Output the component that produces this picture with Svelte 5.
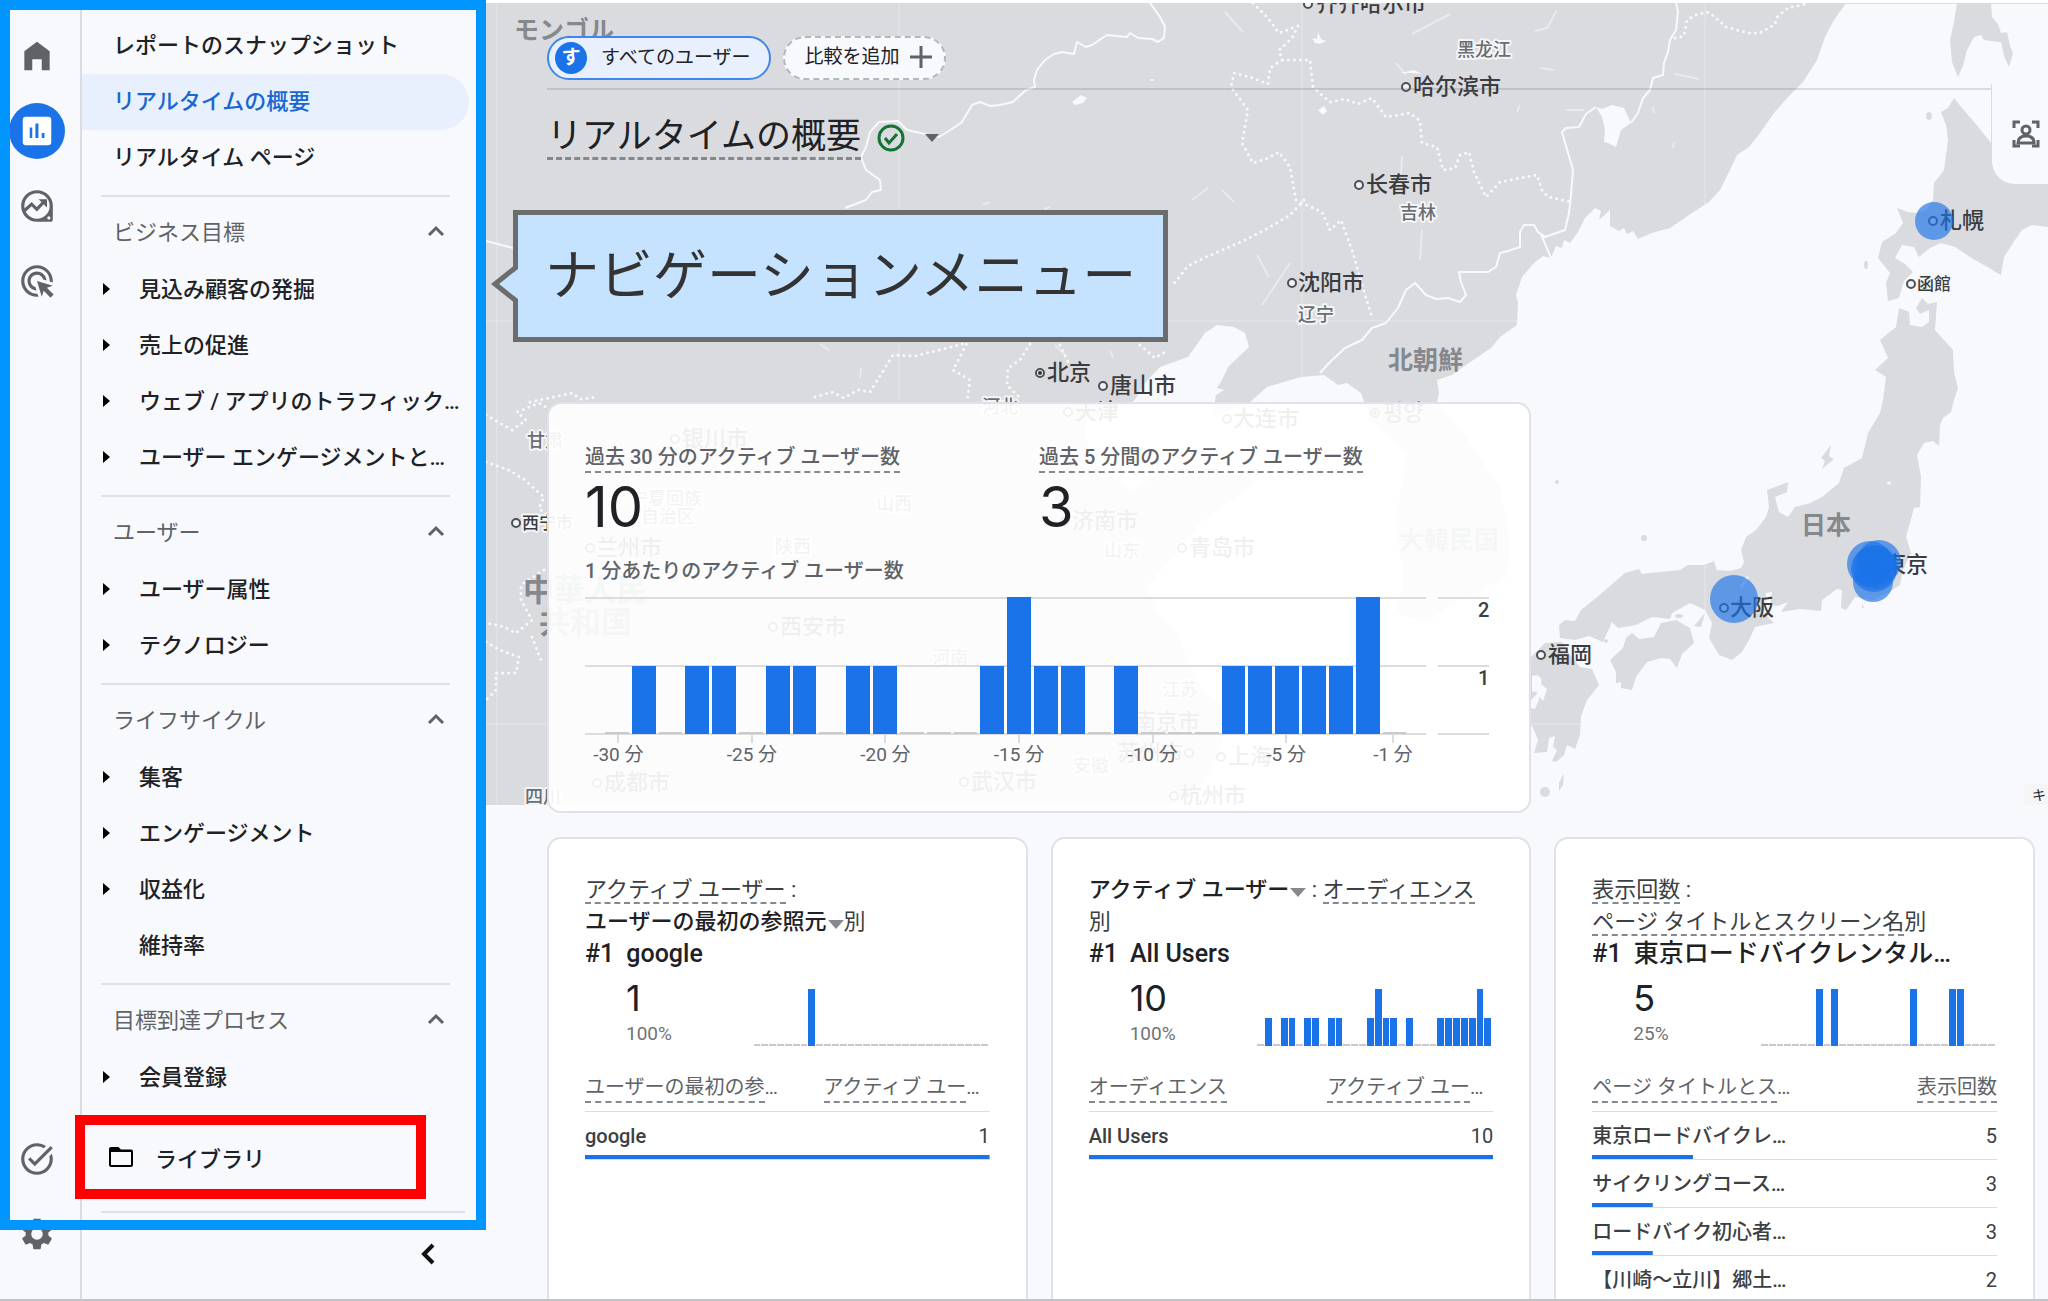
<script>
  const topLinks = [
    { label: 'レポートのスナップショット' },
    { label: 'リアルタイムの概要', active: true },
    { label: 'リアルタイム ページ' }
  ];

  const sections = [
    {
      title: 'ビジネス目標',
      items: [
        { label: '見込み顧客の発掘', open: true },
        { label: '売上の促進', open: true },
        { label: 'ウェブ / アプリのトラフィック…', open: true },
        { label: 'ユーザー エンゲージメントと…', open: true }
      ]
    },
    {
      title: 'ユーザー',
      items: [
        { label: 'ユーザー属性', open: true },
        { label: 'テクノロジー', open: true }
      ]
    },
    {
      title: 'ライフサイクル',
      items: [
        { label: '集客', open: true },
        { label: 'エンゲージメント', open: true },
        { label: '収益化', open: true },
        { label: '維持率', open: false }
      ]
    },
    { title: '目標到達プロセス', items: [{ label: '会員登録', open: true }] }
  ];

  // Active users per minute, from -30 to -1
  const perMinute = [0, 1, 0, 1, 1, 0, 1, 1, 0, 1, 1, 0, 0, 0, 1, 2, 1, 1, 0, 1, 0, 0, 0, 1, 1, 1, 1, 1, 2, 0];
  const axis = [
    { col: 1, text: '-30 分' },
    { col: 6, text: '-25 分' },
    { col: 11, text: '-20 分' },
    { col: 16, text: '-15 分' },
    { col: 21, text: '-10 分' },
    { col: 26, text: '-5 分' },
    { col: 30, text: '-1 分' }
  ];

  const spikes = (hits) => Array.from({ length: 30 }, (_, i) => (hits.includes(i) ? 2 : 0));

  const cards = [
    {
      metric: 'アクティブ ユーザー',
      dimension: 'ユーザーの最初の参照元',
      pick: 'dimension',
      lineBreak: true,
      top: 'google',
      value: '1',
      share: '100%',
      spark: spikes([7]),
      headA: 'ユーザーの最初の参',
      cutA: true,
      headB: 'アクティブ ユー',
      cutB: true,
      rows: [{ name: 'google', n: '1', pct: 100 }]
    },
    {
      metric: 'アクティブ ユーザー',
      dimension: 'オーディエンス',
      pick: 'metric',
      lineBreak: false,
      top: 'All Users',
      value: '10',
      share: '100%',
      spark: [...perMinute.slice(0, 29), 1],
      headA: 'オーディエンス',
      cutA: false,
      headB: 'アクティブ ユー',
      cutB: true,
      rows: [{ name: 'All Users', n: '10', pct: 100 }]
    },
    {
      metric: '表示回数',
      dimension: 'ページ タイトルとスクリーン名',
      pick: '',
      lineBreak: true,
      top: '東京ロードバイクレンタル…',
      value: '5',
      share: '25%',
      spark: spikes([7, 9, 19, 24, 25]),
      headA: 'ページ タイトルとス',
      cutA: true,
      headB: '表示回数',
      cutB: false,
      rows: [
        { name: '東京ロードバイクレ…', n: '5', pct: 25 },
        { name: 'サイクリングコース…', n: '3', pct: 15 },
        { name: 'ロードバイク初心者…', n: '3', pct: 15 },
        { name: '【川崎〜立川】郷土…', n: '2', pct: 10 }
      ]
    }
  ];

  // Map labels: x is the left edge of the text, y its vertical middle; m is the marker's x
  const cities = [
    { t: '齐齐哈尔市', x: 1316, y: 3, m: 1308 },
    { t: '哈尔滨市', x: 1413, y: 86, m: 1406 },
    { t: '长春市', x: 1366, y: 184, m: 1359 },
    { t: '沈阳市', x: 1298, y: 282, m: 1292 },
    { t: '北京', x: 1047, y: 372, m: 1040, capital: true },
    { t: '唐山市', x: 1110, y: 385, m: 1103 },
    { t: '札幌', x: 1940, y: 220, m: 1933 },
    { t: '東京', x: 1884, y: 564 },
    { t: '大阪', x: 1730, y: 607, m: 1724 },
    { t: '福岡', x: 1548, y: 654, m: 1541 },
    { t: '银川市', x: 682, y: 438, m: 675 },
    { t: '兰州市', x: 596, y: 547, m: 590 },
    { t: '西安市', x: 780, y: 626, m: 773 },
    { t: '成都市', x: 604, y: 782, m: 597 },
    { t: '武汉市', x: 971, y: 781, m: 964 },
    { t: '天津', x: 1075, y: 411, m: 1068 },
    { t: '大连市', x: 1233, y: 418, m: 1227 },
    { t: '평양', x: 1383, y: 412, m: 1375, capital: true },
    { t: '济南市', x: 1072, y: 520, m: 1065 },
    { t: '青岛市', x: 1189, y: 547, m: 1182 },
    { t: '南京市', x: 1134, y: 721 },
    { t: '苏州市', x: 1117, y: 752, m: 1189 },
    { t: '上海', x: 1228, y: 756, m: 1221 },
    { t: '杭州市', x: 1180, y: 795, m: 1174 }
  ];
  const towns = [
    { t: '函館', x: 1917, y: 284, m: 1911 },
    { t: '西宁市', x: 522, y: 523, m: 516 }
  ];
  const provinces = [
    { t: '黑龙江', x: 1457, y: 50 },
    { t: '吉林', x: 1400, y: 213 },
    { t: '辽宁', x: 1298, y: 315 },
    { t: '甘肃', x: 527, y: 441 },
    { t: '四川', x: 525, y: 797 },
    { t: '宁夏回族', x: 630, y: 499 },
    { t: '自治区', x: 641, y: 517 },
    { t: '陕西', x: 775, y: 547 },
    { t: '山西', x: 876, y: 504 },
    { t: '河南', x: 932, y: 658 },
    { t: '河北', x: 982, y: 407 },
    { t: '山东', x: 1104, y: 551 },
    { t: '江苏', x: 1162, y: 690 },
    { t: '安徽', x: 1073, y: 766 }
  ];
  const countries = [
    { t: 'モンゴル', x: 514, y: 30 },
    { t: '北朝鮮', x: 1388, y: 360 },
    { t: '日本', x: 1801, y: 525 },
    { t: '大韓民国', x: 1399, y: 540 }
  ];
  const bigCountries = [
    { t: '中華人民', x: 523, y: 590 },
    { t: '共和国', x: 539, y: 622 }
  ];

  const land = [
    // continent
    'M486 3H1846L1834 20L1825 37L1817 60L1803 82L1788 97L1774 113L1760 133L1749 147L1737 155L1729 172L1720 190L1709 202L1692 213L1670 228L1652 233L1638 239L1633 231L1627 234L1624 228L1619 231L1610 226V210L1599 220L1601 211L1595 208L1585 218L1578 232L1570 243L1564 240L1562 248L1556 246L1551 258L1543 256L1534 263L1522 277L1516 295L1518 303L1517 325L1500 337L1491 348L1466 365L1452 375L1437 380L1439 393L1437 402L1464 433L1482 460L1500 487L1511 547L1507 577L1475 593L1446 607L1428 623L1396 613L1403 580L1396 520L1407 453L1370 420L1361 393L1347 383L1338 385L1324 375L1301 377L1267 387L1250 402L1212 418L1216 395L1224 390L1217 388L1222 380L1228 367L1249 347L1245 333L1234 327L1217 325L1205 333L1188 357L1160 367L1146 382L1134 401L1085 420L1090 460L1132 490L1180 460L1260 480L1200 523L1171 560L1146 587L1157 613L1178 633L1190 667L1203 690L1232 715L1215 760L1200 790L1170 805H486Z',
    // Sakhalin
    'M1957 3L1954 22L1950 40L1952 62L1958 77L1963 66L1967 50L1974 37L1981 35L1984 40L1998 42L2001 42L2004 56L2009 67L2013 53L2010 46L2007 32L2001 33L1998 24L1992 17L1991 3Z',
    // Hokkaido
    'M1954 98L1962 108L1975 123L1991 143L2010 160L2048 185V227L2032 225L2022 230L2015 240L2004 257L2001 275L1970 257L1955 247L1941 243L1930 248L1919 257L1914 247L1902 245L1895 258L1905 264L1913 272L1904 281L1899 298L1888 301L1886 283L1890 273L1878 258L1882 242L1896 233L1903 223L1897 208L1908 212L1916 213L1926 210L1933 200L1934 183L1944 170L1948 140L1946 125L1941 112L1948 108Z',
    // Honshu
    'M1899 308L1909 312L1910 325L1922 327L1929 322L1929 310L1920 314L1916 308L1922 298L1928 304L1937 302L1935 330L1944 340L1953 350L1954 372L1958 388L1954 400L1951 412L1943 418L1940 425L1939 446L1933 441L1924 443L1917 455L1921 477L1920 507L1914 508L1906 537L1911 553L1903 570L1900 585L1889 592L1873 600L1855 597L1846 610L1841 608L1842 590L1837 589L1822 600L1821 611L1800 609L1781 612L1788 602L1778 606L1770 605L1772 592L1766 593L1764 613L1774 623L1755 627L1750 638L1742 652L1732 660L1719 655L1709 638L1712 623L1705 610L1690 603L1672 613L1670 619L1652 617L1636 625L1618 628L1612 622L1603 642L1589 636L1575 640L1560 638L1559 625L1565 620L1575 621L1581 610L1596 598L1625 573L1639 569L1642 574L1650 573L1680 570L1688 565L1704 565L1714 561L1717 570L1730 571L1741 568L1744 562L1741 550L1746 537L1756 530L1766 517L1769 507L1767 490L1778 486L1788 482L1787 492L1775 497L1779 512L1788 517L1795 507L1810 503L1822 497L1839 483L1844 468L1862 458L1868 433L1880 413L1883 400L1886 377L1875 370L1888 358L1880 340L1896 327Z',
    // Shikoku, Awaji
    'M1632 633L1639 639L1654 637L1661 623L1676 620L1690 628L1694 643L1682 654L1677 668L1670 659L1661 658L1647 662L1636 677L1632 690L1621 688V682L1616 683V672L1610 660L1623 648L1626 638Z',
    'M1705 613L1701 627L1694 626Z',
    // Kyushu
    'M1528 660L1545 643L1562 642L1570 655L1580 667L1592 669L1599 685L1587 700L1581 716L1580 735L1575 749L1567 745L1564 755L1556 762L1552 761L1557 750L1553 747L1555 736L1549 738L1547 752L1534 753L1538 740L1533 728L1528 720Z',
    // Sado, Tanegashima
    'M1831 445L1829 456L1834 459L1822 469L1825 461L1821 458Z',
    'M1564 773L1563 785L1559 791L1559 783Z'
  ];

  const solidBorders = [
    'M1150 3L1160 17L1165 27L1164 38L1158 42L1152 39L1138 38L1130 33L1127 37L1107 35L1092 45L1086 47L1077 42L1074 54L1062 52L1054 54L1045 60L1037 70L1034 80L1035 87L1026 90L1013 102L1000 105L990 106L980 102L972 105L962 122L952 129L939 137L925 134L907 130L898 121L879 122L870 132L866 147L861 157L866 170L880 180L881 190L872 192L866 200L845 208',
    'M486 241L513 248',
    'M1676 3L1678 12L1676 30L1670 40L1668 52L1664 63L1663 75L1653 78L1650 90L1643 98L1638 113L1631 123',
    'M1596 107L1586 114L1579 127L1566 128L1562 132L1573 170L1571 195L1569 213L1565 230L1545 237L1541 234L1551 258',
    'M1545 237L1538 232L1534 225H1524L1520 232L1520 247L1508 251L1500 253L1496 267L1488 272H1459L1461 282L1466 295L1460 302L1448 298L1436 299L1426 295L1415 283L1406 290L1398 308L1386 323L1372 328L1362 340L1345 348L1330 362L1320 373'
  ];
  const dottedBorders = [
    'M1253 3L1268 18L1279 33L1298 26L1292 38L1279 50L1282 60H1310L1313 87L1330 102L1345 99L1358 104L1372 98L1386 117L1410 113L1420 121L1422 143L1437 147L1443 170L1455 168L1460 155L1469 152L1474 172L1486 197L1500 182L1520 178L1537 175L1542 190L1548 197L1572 202',
    'M1282 60L1270 68L1268 84L1250 77L1234 73L1231 87L1248 110L1242 143L1253 163L1268 158L1279 152L1290 167L1296 200L1322 212L1330 230L1341 220L1353 253L1362 285L1372 317',
    'M1304 200L1290 215L1268 228L1245 240L1222 250L1204 258L1188 266L1171 287',
    'M1675 38L1684 36L1687 20L1698 14L1709 12L1726 27L1748 33L1760 33L1775 24L1777 17L1788 8L1805 4',
    'M815 397L832 392L844 398L858 390L870 392L893 355L915 356L939 350L967 343L953 370L970 380L967 402',
    'M1030 344L1020 360L1008 368L1007 385L1022 400',
    'M1140 345L1155 358L1165 352M1060 345L1068 362',
    'M530 402L572 393L580 399L598 397',
    'M486 415L512 430L526 420L517 412L539 403L546 407',
    'M486 462L509 470L525 480L544 497L539 508L546 515',
    'M544 570L521 585L521 600L532 620L516 633L502 626L486 623',
    'M486 642L500 650L519 657L516 673H496V690L487 699',
    'M532 637L541 660'
  ];
</script>

{#snippet caret(cls)}
  <svg class={cls} viewBox="0 0 14 8" aria-hidden="true"><path d="M0 0h14l-7 8z" fill="currentColor" /></svg>
{/snippet}

<div class="page">
  <aside class="rail">
    <a class="rail-item" href="#home" aria-label="ホーム">
      <svg viewBox="0 0 24 24"><path d="M4 21V9l8-6 8 6v12h-5v-7H9v7z" /></svg>
    </a>
    <a class="rail-item current" href="#reports" aria-label="レポート">
      <svg viewBox="0 0 24 24">
        <rect x="3" y="3" width="18" height="18" rx="2" fill="#fff" />
        <path d="M7.4 9.8H9v6.6H7.4zM11 7.2h1.9v9.2H11zM15 13.2h1.7v3.2H15z" fill="#1a73e8" />
      </svg>
    </a>
    <a class="rail-item" href="#explore" aria-label="探索">
      <svg viewBox="0 0 24 24">
        <path
          fill-rule="evenodd"
          d="M12 2a10 10 0 0 0 0 20h8.4a1.6 1.6 0 0 0 1.6-1.600V12A10 10 0 0 0 12 2zm0 2a8 8 0 1 1 0 16 8 8 0 0 1 0-16zm7.500 14.500a1 1 0 1 1 0 2 1 1 0 0 1 0-2z"
        />
        <path d="M4 15l4.600-4.200 3.300 3.300 4.700-5" fill="none" stroke="#5f6368" stroke-width="2" />
        <path d="M13 7.800h5.300V13z" />
      </svg>
    </a>
    <a class="rail-item" href="#ads" aria-label="広告">
      <svg viewBox="0 0 24 24">
        <path
          d="M11.71,17.99C8.53,17.84,6,15.22,6,12c0-3.31,2.69-6,6-6c3.22,0,5.84,2.53,5.99,5.71l-2.1-0.63C15.48,9.31,13.89,8,12,8 c-2.21,0-4,1.79-4,4c0,1.89,1.31,3.48,3.08,3.89L11.71,17.99z M22,12c0,0.3-0.01,0.6-0.04,0.9l-1.97-0.59C20,12.21,20,12.1,20,12 c0-4.42-3.58-8-8-8s-8,3.58-8,8s3.58,8,8,8c0.1,0,0.21,0,0.31-0.01l0.59,1.97C12.6,21.99,12.3,22,12,22C6.48,22,2,17.52,2,12 C2,6.48,6.48,2,12,2S22,6.48,22,12z M18.23,16.26L22,15l-10-3l3,10l1.26-3.77l4.27,4.27l1.98-1.98L18.23,16.26z"
        />
      </svg>
    </a>
    <span class="grow"></span>
    <a class="rail-item" href="#tasks" aria-label="タスク">
      <svg viewBox="0 0 24 24">
        <path
          d="M22,5.18L10.59,16.6l-4.24-4.24l1.41-1.41l2.83,2.83l10-10L22,5.18z M19.79,10.22C19.92,10.79,20,11.39,20,12 c0,4.42-3.58,8-8,8s-8-3.58-8-8c0-4.42,3.58-8,8-8c1.58,0,3.04,0.46,4.28,1.25l1.44-1.44C16.1,2.67,14.13,2,12,2C6.48,2,2,6.48,2,12 c0,5.52,4.48,10,10,10s10-4.48,10-10c0-1.19-0.22-2.33-0.6-3.39L19.79,10.22z"
        />
      </svg>
    </a>
    <a class="rail-item" href="#admin" aria-label="管理">
      <svg viewBox="0 0 24 24">
        <path
          d="M19.140 12.940c.04-.3.06-.61.06-.94 0-.32-.02-.64-.07-.94l2.030-1.580c.18-.14.23-.41.12-.61l-1.920-3.320c-.12-.22-.37-.29-.59-.22l-2.390.96c-.5-.38-1.030-.7-1.620-.94l-.36-2.540c-.04-.24-.24-.41-.48-.41h-3.840c-.24 0-.43.17-.47.41l-.36 2.540c-.59.24-1.130.57-1.620.94l-2.390-.96c-.22-.08-.47 0-.59.22L2.740 8.870c-.12.21-.08.47.12.61l2.030 1.580c-.05.3-.09.63-.09.94s.02.64.07.94l-2.030 1.580c-.18.14-.23.41-.12.61l1.920 3.320c.12.22.37.29.59.22l2.390-.96c.5.38 1.030.7 1.620.94l.36 2.540c.05.24.24.41.48.41h3.840c.24 0 .44-.17.47-.41l.36-2.540c.59-.24 1.130-.56 1.620-.94l2.390.96c.22.08.47 0 .59-.22l1.920-3.320c.12-.22.07-.47-.12-.61l-2.010-1.580zM12 15.600c-1.980 0-3.600-1.620-3.600-3.600s1.620-3.600 3.600-3.600 3.600 1.620 3.600 3.600-1.620 3.600-3.600 3.600z"
        />
      </svg>
    </a>
  </aside>

  <nav class="nav" aria-label="レポート">
    <div class="top-links">
      {#each topLinks as link}
        <a href="#report" class="top-link" class:active={link.active}>{link.label}</a>
      {/each}
    </div>
    {#each sections as section}
      <section class="group">
        <button class="group-head" type="button">
          <span>{section.title}</span>
          <svg viewBox="0 0 18 12" aria-hidden="true"><path d="M2 10l7-7 7 7" fill="none" stroke="#5f6368" stroke-width="3" /></svg>
        </button>
        {#each section.items as item}
          <a class="group-item" href="#report">
            <span class="marker">
              {#if item.open}
                <svg viewBox="0 0 7 12" aria-hidden="true"><path d="M0 0l7 6-7 6z" /></svg>
              {/if}
            </span>
            {item.label}
          </a>
        {/each}
      </section>
    {/each}
    <a class="library" href="#library">
      <svg viewBox="0 0 24 20" aria-hidden="true">
        <path fill-rule="evenodd" d="M2 0h7.500l2.500 2.500h10a2 2 0 0 1 2 2V18a2 2 0 0 1-2 2H2a2 2 0 0 1-2-2V2a2 2 0 0 1 2-2zm0 5v13h20V5z" />
      </svg>
      ライブラリ
    </a>
    <div class="nav-foot">
      <button type="button" aria-label="メニューを閉じる">
        <svg viewBox="0 0 14 22" aria-hidden="true"><path d="M12 2L3 11l9 9" fill="none" stroke="#111" stroke-width="4" /></svg>
      </button>
    </div>
  </nav>

  <main class="main">
    <svg class="map" viewBox="486 3 1562 802" preserveAspectRatio="xMinYMin slice" aria-label="地図">
      <g class="land">
        {#each land as d}<path {d} />{/each}
        <ellipse cx="1929" cy="116" rx="3" ry="4" />
        <ellipse cx="1866" cy="265" rx="2" ry="4" />
        <circle cx="1644" cy="538" r="3" />
        <circle cx="1557" cy="482" r="2" />
        <circle cx="1545" cy="792" r="5" />
        <circle cx="1606" cy="641" r="2" />
        <ellipse cx="1679" cy="616" rx="4" ry="2" />
        <path d="M1862 603l2 5h-2z" />
      </g>
      <g class="water">
        <path d="M1596 107L1602 109L1612 105L1624 108L1631 123L1621 130L1616 147L1608 143L1604 142L1605 130L1602 117Z" />
        <path d="M1072 102l9-7 6 3-4 5-8 2z" />
        <path d="M1318 110l6-4 3 5-4 4zM1312 38l5 1 1-7 3 7 5 2-6 3-5-1zM1400 73l14-3 8 4-10-1z" />
        <path d="M1532 676c7-3 11 3 9 8l6 5-4 12-3-4-5 12-4-1v-8l7-7-6-2z" />
        <path d="M1741 585l6-9 2 2-8 11z" />
        <path d="M1886 483l4-2 1 4z" />
        <ellipse cx="1152" cy="80" rx="2" ry="1" />
      </g>
      <g class="streaks">
        <path d="M983 205l7-3M1044 209l6-2M820 344l10 7M860 378l1-10M1225 12l18 20M1412 34l38-20M1535 31l12-3 10-18M1396 63l10 12M1517 112l3-7M1566 110l18 0M1192 200l16-12M1222 190l12 12M1257 255l12 22M1262 305l28-42M1402 156l-1 18M1420 260l2-30M1110 350l3 8M1055 345l10 10M1653 107l1 6M1673 148l1-6M1675 74l24 5M1540 68l14 2" />
      </g>
      <g class="tiles">
        <path d="M497 3V805M899 3V400M1302 3V400M1705 3V220M1705 565V610M486 321H1517M486 724H547M1531 724H1580" />
      </g>
      <g class="solid">
        {#each solidBorders as d}<path {d} />{/each}
      </g>
      <g class="dotted">
        {#each dottedBorders as d}<path {d} />{/each}
      </g>
      {#each cities as c}
        {#if c.m}
          <circle class="spot" cx={c.m} cy={c.y + 1} r="4" />
          {#if c.capital}<circle cx={c.m} cy={c.y + 1} r="2" fill="#333" />{/if}
        {/if}
        <text class="city" x={c.x} y={c.y + 8}>{c.t}</text>
      {/each}
      {#each towns as c}
        <circle class="spot" cx={c.m} cy={c.y} r="4" />
        <text class="town" x={c.x} y={c.y + 6}>{c.t}</text>
      {/each}
      {#each provinces as c}<text class="province" x={c.x} y={c.y + 6}>{c.t}</text>{/each}
      {#each countries as c}<text class="country" x={c.x} y={c.y + 9}>{c.t}</text>{/each}
      {#each bigCountries as c}<text class="country big" x={c.x} y={c.y + 11}>{c.t}</text>{/each}
      <g class="users">
        <circle cx="1934" cy="221" r="19" />
        <circle cx="1734" cy="599" r="24" />
        <circle cx="1870" cy="564" r="23" />
        <circle cx="1879" cy="562" r="22" />
        <circle cx="1875" cy="567" r="22" />
        <circle cx="1874" cy="569" r="23" />
        <circle cx="1873" cy="582" r="20" />
      </g>
    </svg>
    <button class="map-keys" type="button" aria-label="キーボード ショートカット">キ</button>

    <header class="head">
      <div class="chips">
        <button class="chip all" type="button"><span class="avatar">す</span>すべてのユーザー</button>
        <button class="chip add" type="button">
          比較を追加
          <svg viewBox="0 0 22 22" aria-hidden="true"><path d="M11 0v22M0 11h22" stroke="#5f6368" stroke-width="3" /></svg>
        </button>
      </div>
      <div class="title-row">
        <h1>リアルタイムの概要</h1>
        <button class="status" type="button" aria-label="データの状態">
          <svg class="ok" viewBox="0 0 28 28" aria-hidden="true">
            <circle cx="14" cy="14" r="12" fill="none" stroke="#137333" stroke-width="3" />
            <path d="M8 14l4 5 8-9" fill="none" stroke="#137333" stroke-width="3" />
          </svg>
          {@render caret('caret title-caret')}
        </button>
      </div>
    </header>

    <div class="board">
      <section class="overview">
        <div class="totals">
          <div><span class="label dashed">過去 30 分のアクティブ ユーザー数</span><strong>10</strong></div>
          <div><span class="label dashed">過去 5 分間のアクティブ ユーザー数</span><strong>3</strong></div>
        </div>
        <p class="label sub">1 分あたりのアクティブ ユーザー数</p>
        <div class="chart">
          <div class="plot">
            <div class="lines"><i></i><i></i></div>
            <div class="bars">
              {#each perMinute as v}
                <span class="bar" class:zero={v === 0} style="height: {v * 50}%"></span>
              {/each}
            </div>
          </div>
          <div class="scale"><span>2</span><span>1</span></div>
          <div class="axis">
            {#each axis as a}<span style="grid-column: {a.col}">{a.text}</span>{/each}
          </div>
        </div>
      </section>

      {#each cards as card}
        <section class="card">
          <h2>
            {#if card.pick === 'metric'}
              <button type="button" class="picker">{card.metric}{@render caret('caret')}</button>
            {:else}<span class="dashed">{card.metric}</span>{/if}
            :{#if card.lineBreak}<br />{/if}
            {#if card.pick === 'dimension'}<button type="button" class="picker">{card.dimension}{@render caret('caret')}</button>{:else}<span class="dashed">{card.dimension}</span>{/if}別
          </h2>
          <p class="rank"><span>#1</span><span>{card.top}</span></p>
          <div class="figure">
            <div class="amount"><strong>{card.value}</strong><small>{card.share}</small></div>
            <div class="spark">
              {#each card.spark as v}
                <span class="bar" class:zero={v === 0} style="height: {v * 50}%"></span>
              {/each}
            </div>
          </div>
          <table>
            <thead>
              <tr>
                <th scope="col"><span class="dashed">{card.headA}</span>{card.cutA ? '…' : ''}</th>
                <th scope="col" class="num" class:cut={card.cutB}><span class="dashed">{card.headB}</span>{card.cutB ? '…' : ''}</th>
              </tr>
            </thead>
            <tbody>
              {#each card.rows as row}
                <tr style="--share: {row.pct}%"><td>{row.name}</td><td class="num">{row.n}</td></tr>
              {/each}
            </tbody>
          </table>
        </section>
      {/each}
    </div>

    <button class="side-tab" type="button" aria-label="ユーザー スナップショット">
      <svg viewBox="0 0 28 28" fill="none" stroke="#5f6368" stroke-width="3" aria-hidden="true">
        <path d="M2 8V2h6M20 2h6v6M26 20v6h-6M8 26H2v-6" />
        <circle cx="14" cy="10" r="4" />
        <path d="M6 23c0-5 3-7 8-7s8 2 8 7z" />
      </svg>
    </button>

    <div class="callout">
      <svg viewBox="0 0 27 36" aria-hidden="true">
        <path d="M27 3L5 18l22 15z" fill="#c5e2ff" />
        <path d="M24 2L4 18l20 16" fill="none" stroke="#6b6c6e" stroke-width="5" />
      </svg>
      ナビゲーションメニュー
    </div>
  </main>

  <div class="frame"></div>
</div>

<style>
  :global(body) {
    margin: 0;
    background: #f8f9fc;
  }

  .page {
    position: relative;
    display: grid;
    grid-template-columns: 82px 404px minmax(0, 1fr);
    height: 100vh;
    box-sizing: border-box;
    overflow: hidden;
    border-bottom: 2px solid #c2c4c8;
    background: #f8f9fc;
    color: #202124;
    font-family: Roboto, 'Noto Sans CJK JP', sans-serif;
    font-size: 22px;
  }
  button {
    margin: 0;
    padding: 0;
    border: 0;
    background: none;
    color: inherit;
    font: inherit;
    text-align: left;
  }
  a {
    color: inherit;
    text-decoration: none;
  }
  svg {
    flex: none;
  }

  /* Icon rail */
  .rail {
    display: flex;
    flex-direction: column;
    gap: 19px;
    padding: 28px 0 37px 9px;
    border-right: 2px solid #dadce0;
  }
  .rail-item {
    display: grid;
    place-items: center;
    width: 56px;
    height: 56px;
    border-radius: 50%;
  }
  .rail-item.current {
    background: #1a73e8;
  }
  .rail-item svg {
    width: 38px;
    height: 38px;
    fill: #5f6368;
  }
  .grow {
    flex: 1;
  }

  /* Report navigation */
  .nav {
    display: flex;
    flex-direction: column;
    padding-top: 18px;
    font-weight: 500;
  }
  .top-links {
    padding-bottom: 9px;
  }
  .top-link {
    display: flex;
    align-items: center;
    box-sizing: border-box;
    height: 56px;
    margin-right: 17px;
    padding: 0 0 6px 31px;
    border-radius: 0 28px 28px 0;
  }
  .top-link.active {
    background: #e8f0fe;
    color: #1967d2;
  }
  .group {
    margin: 0 16px 0 19px;
    padding-bottom: 10px;
  }
  .group-head {
    display: flex;
    align-items: center;
    justify-content: space-between;
    width: calc(100% - 20px);
    height: 66px;
    padding: 3px 5px 0 12px;
    border-top: 2px solid #dfe1e4;
    color: #5f6368;
    font-weight: 400;
  }
  .group-head span {
    padding-bottom: 2px;
  }
  .group-head svg {
    width: 18px;
    height: 12px;
  }
  .group-item {
    display: flex;
    align-items: center;
    box-sizing: border-box;
    height: 56px;
    padding-bottom: 4px;
    white-space: nowrap;
  }
  .marker {
    display: flex;
    width: 38px;
    padding: 4px 0 0 2px;
    box-sizing: border-box;
  }
  .marker svg {
    width: 7px;
    height: 12px;
  }
  .library {
    position: relative;
    display: flex;
    align-items: center;
    gap: 22px;
    height: 64px;
    margin: 0 60px 12px -7px;
    padding-left: 24px;
    border: 10px solid #f00;
    background: #f8f9fc;
  }
  .library svg {
    width: 24px;
    height: 20px;
  }
  .nav-foot {
    display: flex;
    justify-content: flex-end;
    margin: 0 21px 0 19px;
    padding: 30px 30px 0 0;
    border-top: 2px solid #dfe1e4;
  }
  .nav-foot button {
    display: flex;
  }
  .nav-foot svg {
    width: 14px;
    height: 22px;
  }

  /* Map */
  .main {
    position: relative;
    border-top: 3px solid #fff;
    overflow: hidden;
  }
  .map {
    position: absolute;
    top: 0;
    left: 0;
    width: 100%;
    height: 802px;
    background: #f8f9fc;
    box-shadow: inset 0 1px #dadce0;
  }
  .land {
    fill: #dadbdf;
  }
  .water {
    fill: #f8f9fc;
  }
  .solid,
  .dotted,
  .tiles,
  .streaks {
    fill: none;
    stroke: #f8f9fc;
    stroke-width: 2;
    stroke-linejoin: round;
  }
  .dotted {
    stroke-width: 3;
    stroke-dasharray: 0 6;
    stroke-linecap: round;
  }
  .tiles {
    stroke-width: 1;
    opacity: 0.4;
  }
  .streaks {
    opacity: 0.5;
  }
  .spot {
    fill: #f1f2f4;
    stroke: #4d5054;
    stroke-width: 2;
  }
  .map text {
    font-family: 'Noto Sans CJK SC', 'Noto Sans CJK JP', 'Noto Sans CJK KR', sans-serif;
    paint-order: stroke;
    stroke-linejoin: round;
  }
  .city {
    fill: #3a3c40;
    font-size: 22px;
    font-weight: 500;
  }
  .town {
    fill: #3a3c40;
    stroke: #f4f5f7;
    stroke-width: 4;
    font-size: 17px;
    font-weight: 500;
  }
  .province {
    fill: #6a6d71;
    stroke: #f4f5f7;
    stroke-width: 4;
    font-size: 18px;
    font-weight: 500;
  }
  .country {
    fill: #85888c;
    font-size: 25px;
    font-weight: 700;
  }
  .country.big {
    font-size: 31px;
  }
  .users {
    fill: #1a73e8;
    fill-opacity: 0.65;
  }
  .map-keys {
    position: absolute;
    top: 781px;
    right: 0;
    width: 24px;
    height: 21px;
    padding-left: 8px;
    overflow: hidden;
    background: #f5f5f5;
    font-size: 14px;
    line-height: 20px;
  }

  /* Page header */
  .head {
    position: relative;
    box-sizing: border-box;
    min-height: 399px;
    padding: 33px 43px 0 61px;
  }
  .chips {
    display: flex;
    gap: 12px;
    padding-bottom: 8px;
    border-bottom: 2px solid rgba(60, 64, 67, 0.16);
    font-size: 19px;
  }
  .chip {
    display: flex;
    align-items: center;
    box-sizing: border-box;
    height: 44px;
    border-radius: 22px;
    line-height: 24px;
  }
  .chip.all {
    gap: 14px;
    padding: 0 18px 0 6px;
    border: 2px solid #3f87ec;
    background: #e8f0fe;
  }
  .avatar {
    display: grid;
    place-items: center;
    width: 32px;
    height: 32px;
    border-radius: 50%;
    background: #1a73e8;
    color: #fff;
    font-weight: 700;
  }
  .chip.add {
    gap: 10px;
    padding: 0 12px 2px 20px;
    border: 2px dashed #b4b7bb;
    background: #f8f9fc;
  }
  .chip.add svg {
    width: 22px;
    height: 22px;
  }
  .title-row {
    display: flex;
    align-items: flex-end;
    gap: 16px;
    padding-top: 27px;
  }
  h1 {
    margin: 0;
    border-bottom: 3px dashed #85888c;
    font-size: 35px;
    font-weight: 400;
    line-height: 40px;
  }
  .status {
    display: flex;
    align-items: center;
    gap: 20px;
    padding-bottom: 8px;
  }
  .ok {
    width: 28px;
    height: 28px;
  }
  .caret {
    width: 14px;
    height: 8px;
    color: #85888c;
  }
  .title-caret {
    color: #5f6368;
  }

  /* Cards */
  .board {
    position: relative;
    display: grid;
    grid-template-columns: repeat(3, minmax(0, 1fr));
    gap: 24px 23px;
    padding: 0 13px 0 61px;
  }
  .overview,
  .card {
    box-sizing: border-box;
    border: 2px solid #e0e2e7;
    border-radius: 14px;
    background: #fff;
  }
  .overview {
    grid-column: span 2;
    padding: 39px 40px 44px 36px;
    background: rgba(255, 255, 255, 0.92);
  }
  .overview + .card {
    grid-column: 1;
  }
  .totals {
    display: grid;
    grid-template-columns: 454px 1fr;
  }
  .totals div {
    display: flex;
    flex-direction: column;
    align-items: flex-start;
  }
  .label {
    color: #5f6368;
    font-size: 20px;
    font-weight: 500;
    line-height: 28px;
  }
  .dashed {
    border-bottom: 2px dashed #85888c;
  }
  strong {
    font-family: Inter, sans-serif;
    font-weight: 400;
  }
  .totals strong {
    font-size: 56px;
    line-height: 68px;
  }
  .sub {
    margin: 16px 0 12px;
  }
  .chart {
    display: grid;
    grid-template-columns: 1fr 51px;
    column-gap: 12px;
  }
  .plot {
    display: grid;
    height: 138px;
  }
  .lines,
  .bars {
    grid-area: 1 / 1;
  }
  .lines,
  .scale {
    display: grid;
    grid-template-rows: 1fr 1fr;
    border-bottom: 2px solid #dadce0;
  }
  .lines i,
  .scale span {
    border-top: 2px solid #dadce0;
  }
  .scale span {
    color: #3c4043;
    font-size: 20px;
    font-weight: 500;
    line-height: 22px;
    text-align: right;
  }
  .bars,
  .axis {
    display: grid;
    grid-template-columns: repeat(30, minmax(0, 1fr));
    padding: 0 20px;
  }
  .bars {
    align-items: end;
    column-gap: 3px;
    margin-bottom: 1px;
  }
  .bar {
    background: #1a73e8;
  }
  .bar.zero {
    min-height: 2px;
    background: #c8cacd;
  }
  .axis {
    color: #5f6368;
    font-size: 19px;
    line-height: 24px;
    white-space: nowrap;
  }
  .axis span {
    display: flex;
    flex-direction: column;
    align-items: center;
  }
  .axis span::before {
    content: '';
    width: 2px;
    height: 8px;
    background: #dadce0;
  }

  .card {
    min-height: 520px;
    padding: 35px 36px 0;
  }
  h2 {
    margin: 0;
    color: #3c4043;
    font-size: 22px;
    font-weight: 400;
    line-height: 32px;
  }
  .picker {
    color: #202124;
    font-weight: 500;
  }
  .picker .caret {
    width: 16px;
    height: 9px;
    margin-left: 1px;
  }
  .rank {
    display: flex;
    gap: 12px;
    margin: 0;
    font-size: 25px;
    font-weight: 500;
    line-height: 32px;
    white-space: nowrap;
  }
  .figure {
    display: flex;
    justify-content: space-between;
    align-items: flex-end;
    padding: 8px 0 13px 41px;
  }
  .amount {
    display: flex;
    flex-direction: column;
  }
  .amount strong {
    font-size: 36px;
    line-height: 40px;
  }
  .amount small {
    color: #6f7377;
    font-size: 19px;
    line-height: 32px;
  }
  .spark {
    display: grid;
    grid-template-columns: repeat(30, minmax(0, 1fr));
    column-gap: 1px;
    align-items: end;
    width: 234px;
    height: 57px;
    margin: 0 2px 4px 0;
  }
  table {
    width: 100%;
    border-collapse: collapse;
    font-size: 20px;
  }
  th,
  td {
    height: 47px;
    padding: 0;
    line-height: 28px;
    text-align: left;
    white-space: nowrap;
  }
  th {
    height: 48px;
    color: #5f6368;
    font-weight: 400;
  }
  th .dashed {
    padding-bottom: 2px;
  }
  .num {
    text-align: right;
  }
  .num.cut {
    padding-right: 10px;
  }
  tr {
    border-bottom: 1px solid #dadce0;
  }
  td {
    color: #3c4043;
    font-weight: 500;
  }
  td.num {
    font-weight: 400;
  }
  tbody tr {
    background: linear-gradient(#1a73e8, #1a73e8) 0 100% / var(--share) 4px no-repeat;
  }

  /* Overlays */
  .side-tab {
    position: absolute;
    top: 81px;
    right: 0;
    display: grid;
    place-items: center;
    width: 57px;
    height: 101px;
    padding-left: 12px;
    border-left: 1px solid #dadce0;
    border-bottom: 1px solid #dadce0;
    border-bottom-left-radius: 24px;
    background: #f8f9fc;
  }
  .side-tab svg {
    width: 28px;
    height: 28px;
  }
  .callout {
    position: absolute;
    top: 207px;
    left: 27px;
    padding: 0 27px 8px;
    border: 5px solid #6b6c6e;
    background: #c5e2ff;
    color: #333;
    font-family: 'Noto Sans CJK JP', sans-serif;
    font-size: 54px;
    line-height: 114px;
    white-space: nowrap;
  }
  .callout svg {
    position: absolute;
    top: 51px;
    left: -27px;
    width: 27px;
    height: 36px;
  }
  .frame {
    position: absolute;
    inset: 0 auto 69px 0;
    width: 466px;
    border: 10px solid #0095ff;
    pointer-events: none;
  }
</style>
